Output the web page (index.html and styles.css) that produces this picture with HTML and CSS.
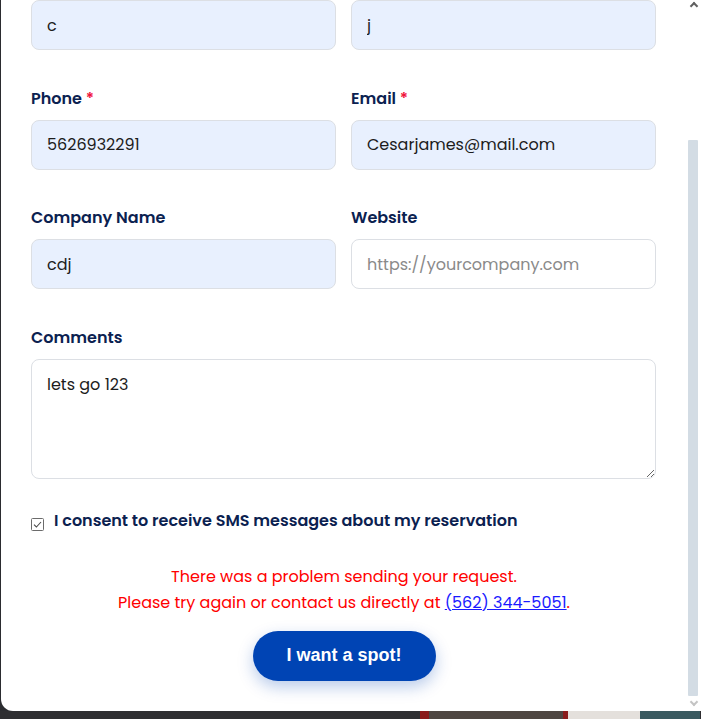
FILE: index.html
```html
<!DOCTYPE html>
<html lang="en">
<head>
<meta charset="utf-8">
<title>Reservation</title>
<link rel="stylesheet" href="styles.css">
</head>
<body>
<div class="modal">
  <form class="form">
    <div class="grid">
      <div class="field">
        <input class="input filled" type="text" value="c">
      </div>
      <div class="field">
        <input class="input filled" type="text" value="j">
      </div>
      <div class="field">
        <label class="label">Phone <span class="req">*</span></label>
        <input class="input filled" type="text" value="5626932291">
      </div>
      <div class="field">
        <label class="label">Email <span class="req">*</span></label>
        <input class="input filled" type="text" value="Cesarjames@mail.com">
      </div>
      <div class="field">
        <label class="label">Company Name</label>
        <input class="input filled" type="text" value="cdj">
      </div>
      <div class="field">
        <label class="label">Website</label>
        <input class="input" type="text" placeholder="https://yourcompany.com">
      </div>
      <div class="field wide">
        <label class="label">Comments</label>
        <textarea class="input textarea">lets go 123</textarea>
      </div>
    </div>
    <label class="consent">
      <span class="check" aria-hidden="true">
        <svg width="13" height="13" viewBox="0 0 13 13"><rect x="0.5" y="0.5" width="12" height="12" rx="1" fill="#fff" stroke="#6b6b6b"/><path d="M3 6.6 L5.4 9 L10 4" fill="none" stroke="#4a4a4a" stroke-width="1.1"/></svg>
      </span>
      <span>I consent to receive SMS messages about my reservation</span>
    </label>
    <p class="error">There was a problem sending your request.<br>Please try again or contact us directly at <a href="#">(562) 344-5051</a>.</p>
    <div class="actions">
      <button class="btn" type="button">I want a spot!</button>
    </div>
  </form>
  <div class="scrollbar">
    <span class="arrow up"></span>
    <span class="thumb"></span>
    <span class="arrow down"></span>
  </div>
</div>
<div class="backdrop-strip">
  <span class="blk b1"></span><span class="blk b2"></span><span class="blk b3"></span><span class="blk b4"></span><span class="blk b5"></span>
</div>
</body>
</html>
```

FILE: styles.css
```css
* { box-sizing: border-box; }
html, body { margin: 0; padding: 0; }
body {
  background: #2b2c30;
  overflow: hidden;
  height: 719px;
  font-family: "Poppins", "Inter", "DejaVu Sans", sans-serif;
}
.modal {
  position: relative;
  margin-left: 1px;
  width: 700px;
  height: 711px;
  background: #fff;
  border-radius: 0 0 0 12px;
  overflow: hidden;
}
.form {
  padding: 0 44px 0 30px;
  margin: 0;
}
.grid {
  display: grid;
  grid-template-columns: 305px 305px;
  column-gap: 15px;
  row-gap: 35.5px;
}
.wide { grid-column: 1 / -1; }
.field {
  display: flex;
  flex-direction: column;
  gap: 10px;
}
.label {
  font-size: 16px;
  line-height: 24px;
  padding-top: 1px;
  margin-bottom: -1px;
  font-weight: 600;
  color: #0b2150;
}
.req { color: #f0143c; }
.input {
  height: 50px;
  width: 100%;
  border: 1px solid #dcdfe4;
  border-radius: 8px;
  padding: 0 15px;
  font-family: inherit;
  font-size: 16px;
  color: #1c1c1c;
  background: #fff;
  outline: none;
}
.input::placeholder { color: #8a8a8a; }
.filled { background: #e8f0fe; }
.textarea {
  height: 120px;
  padding: 13px 15px;
  resize: vertical;
  line-height: 24px;
}
.consent {
  display: flex;
  align-items: center;
  gap: 10px;
  margin-top: 30px;
  height: 24px;
  font-size: 16px;
  font-weight: 600;
  color: #0b2150;
}
.check {
  display: flex;
  margin-top: 7px;
  width: 13px;
  height: 13px;
}
.error {
  margin: 31px 0 0;
  text-align: center;
  color: #ff0000;
  font-size: 16px;
  line-height: 26px;
}
.error a { color: #1a1aff; }
.actions {
  display: flex;
  justify-content: center;
  margin-top: 15px;
}
.btn {
  width: 183px;
  height: 50px;
  border: none;
  border-radius: 25px;
  background: #0044b4;
  color: #fff;
  font-family: "Liberation Sans", Arial, sans-serif;
  font-weight: 700;
  font-size: 18px;
  box-shadow: 0 6px 16px rgba(0, 68, 180, 0.28);
}
.scrollbar {
  position: absolute;
  top: 0;
  right: 0;
  width: 15px;
  height: 711px;
  background: #fff;
}
.thumb {
  position: absolute;
  left: 2px;
  top: 140px;
  width: 10px;
  height: 556px;
  background: #d3dce4;
  border-radius: 1px;
}
.arrow {
  position: absolute;
  left: 5px;
  width: 6px;
  height: 6px;
  border-left: 2px solid #606060;
  border-top: 2px solid #606060;
}
.arrow.up { top: 3px; transform: rotate(45deg); }
.arrow.down { top: 699px; transform: rotate(225deg); border-color: #c4c4c4; }
.backdrop-strip {
  position: relative;
  height: 8px;
  background: #2e2e31;
}
.blk { position: absolute; top: 0; height: 8px; }
.b1 { left: 420px; width: 9px; background: #8a1a1a; }
.b2 { left: 429px; width: 134px; background: #4e4642; }
.b3 { left: 563px; width: 5px; background: #8a1c1c; }
.b4 { left: 568px; width: 72px; background: #e4e0dc; }
.b5 { left: 640px; width: 60px; background: #3a5a60; }
```
